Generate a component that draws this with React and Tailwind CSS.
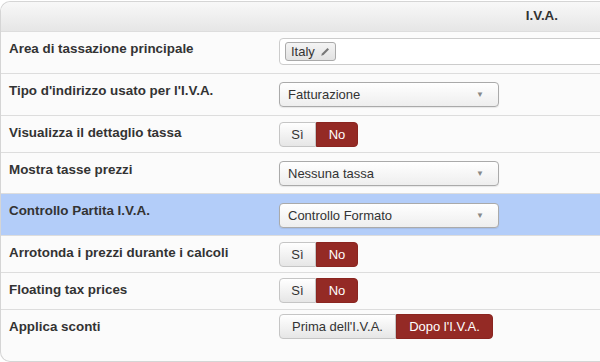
import React from 'react';

const font = { fontFamily: '"Liberation Sans", Arial, sans-serif' };

const Toggle = ({ yes = 'Sì', no = 'No', yesW = 'w-[37px]', noW = 'w-[42px]' }) => (
    <div className="flex h-[25px] text-[13px]">
        <button className={`${yesW} rounded-l-[4px] border border-[#c5c5c5] bg-gradient-to-b from-white to-[#e6e6e6] text-[#333]`}>
            {yes}
        </button>
        <button className={`${noW} rounded-r-[4px] border border-[#8a2520] bg-[#942a25] text-white`}>
            {no}
        </button>
    </div>
);

const Select = ({ value }) => (
    <div className="flex h-[25px] w-[220px] items-center justify-between rounded-[4px] border border-[#aaa] bg-gradient-to-b from-white to-[#eeeeee] pl-[8px] pr-[14px] text-[13px] text-[#333] shadow-[0_1px_1px_rgba(0,0,0,0.08)]">
        <span>{value}</span>
        <span className="text-[8px] text-[#888]">▼</span>
    </div>
);

const Pencil = () => (
    <svg width="10" height="10" viewBox="0 0 10 10" className="ml-[5px]">
        <path d="M7.5 1 L9 2.5 L3.5 8 L1.2 8.8 L2 6.5 Z" fill="#777" />
    </svg>
);

const Row = ({ label, h, pt, highlight, children }) => (
    <div className={`flex border-t border-[#dddddd] ${h} ${highlight ? 'bg-[#b3cdf9]' : ''}`}>
        <div className="w-[278px] shrink-0 pl-[8px] pt-[8px] text-[13.4px] font-bold leading-[18px] text-[#333]">
            {label}
        </div>
        <div className={pt}>{children}</div>
    </div>
);

export default function App() {
    return (
        <div className="h-[362px] w-[600px] overflow-hidden bg-white" style={font}>
            <div className="mt-px w-[640px] rounded-l-[10px] border border-r-0 border-[#d5d5d5] bg-[#fbfbfb]">
                <div className="flex h-[29px] items-center justify-end rounded-tl-[10px] bg-gradient-to-b from-[#f8f8f8] to-[#e6e6e6] pr-[82px] text-[13.4px] font-bold text-[#333]">
                    I.V.A.
                </div>
                <Row label="Area di tassazione principale" h="h-[42px]" pt="pt-[6px]">
                    <div className="flex h-[27px] w-[360px] items-center rounded-[4px] border border-[#cccccc] bg-white pl-[5px]">
                        <span className="flex h-[19px] items-center rounded-[3px] border border-[#aaa] bg-gradient-to-b from-[#f4f4f4] to-[#e2e2e2] px-[5px] text-[13px] text-[#333]">
                            Italy
                            <Pencil />
                        </span>
                    </div>
                </Row>
                <Row label="Tipo d'indirizzo usato per l'I.V.A." h="h-[42px]" pt="pt-[8px]">
                    <Select value="Fatturazione" />
                </Row>
                <Row label="Visualizza il dettaglio tassa" h="h-[37px]" pt="pt-[6px]">
                    <Toggle />
                </Row>
                <Row label="Mostra tasse prezzi" h="h-[41px]" pt="pt-[8px]">
                    <Select value="Nessuna tassa" />
                </Row>
                <Row label="Controllo Partita I.V.A." h="h-[42px]" pt="pt-[9px]" highlight>
                    <Select value="Controllo Formato" />
                </Row>
                <Row label="Arrotonda i prezzi durante i calcoli" h="h-[37px]" pt="pt-[6px]">
                    <Toggle />
                </Row>
                <Row label="Floating tax prices" h="h-[37px]" pt="pt-[5px]">
                    <Toggle />
                </Row>
                <div className="flex h-[52px] rounded-bl-[10px] border-t border-[#dddddd]">
                    <div className="w-[278px] shrink-0 pl-[8px] pt-[8px] text-[13.4px] font-bold leading-[18px] text-[#333]">
                        Applica sconti
                    </div>
                    <div className="pt-[4px]">
                        <Toggle yes="Prima dell'I.V.A." no="Dopo l'I.V.A." yesW="w-[117px]" noW="w-[97px]" />
                    </div>
                </div>
            </div>
        </div>
    );
}
